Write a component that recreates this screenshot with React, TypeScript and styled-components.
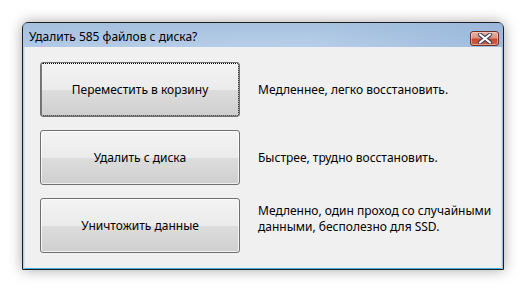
import React from "react";
import styled, { createGlobalStyle } from "styled-components";

const GlobalStyle = createGlobalStyle`
    html, body {
        margin: 0;
        padding: 0;
        background: #ffffff;
    }
    body {
        font-family: "Noto Sans", "Open Sans", sans-serif;
        font-size: 12px;
        color: #000;
    }
`;

interface Choice {
    label: string;
    lines: string[];
    focused?: boolean;
}

const choices: Choice[] = [
    {label: "Переместить в корзину", lines: ["Медленнее, легко восстановить."], focused: true},
    {label: "Удалить с диска", lines: ["Быстрее, трудно восстановить."]},
    {label: "Уничтожить данные", lines: ["Медленно, один проход со случайными", "данными, бесполезно для SSD."]},
];

const CloseIcon = () => (
    <svg width="16" height="11" viewBox="0 0 16 11">
        <path d="M3 1.5 L13 9.5 M13 1.5 L3 9.5" stroke="#3b3f5a" strokeWidth="4.2" strokeLinecap="round"/>
        <path d="M3 1.5 L13 9.5 M13 1.5 L3 9.5" stroke="#ffffff" strokeWidth="2.2" strokeLinecap="round"/>
    </svg>
);

const App: React.FC = () => {
    return (
        <Page>
            <GlobalStyle/>
            <Window>
                <TitleBar>
                    <Title>Удалить 585 файлов с диска?</Title>
                    <CloseButton><CloseIcon/></CloseButton>
                </TitleBar>
                <Client>
                    {choices.map((c) => (
                        <Row key={c.label}>
                            <ActionButton $focused={c.focused}>{c.label}</ActionButton>
                            <Description $lift={c.lines.length > 1}>
                                {c.lines.map((l) => <div key={l}>{l}</div>)}
                            </Description>
                        </Row>
                    ))}
                </Client>
            </Window>
        </Page>
    );
};

export default App;

const Page = styled.div`
    width: 526px;
    height: 292px;
    padding: 22px 0 0 22px;
    box-sizing: border-box;
`;

const Window = styled.div`
    width: 482px;
    height: 248px;
    box-sizing: border-box;
    border: 1px solid #202020;
    border-radius: 6px 6px 0 0;
    background: linear-gradient(90deg, #b3cae6 0%, #b8cfe9 60%, #9fbbdd 100%);
    box-shadow: 0 0 14px rgba(0, 0, 0, 0.35);
    display: flex;
    flex-direction: column;
`;

const TitleBar = styled.div`
    height: 24px;
    display: flex;
    align-items: center;
    justify-content: space-between;
    padding: 0 4px 0 6px;
    background: linear-gradient(180deg, rgba(150, 180, 215, 0.5) 0%, rgba(255, 255, 255, 0) 100%);
`;

const Title = styled.span`
    font-family: "Noto Sans", "Open Sans", sans-serif;
    font-size: 12px;
    color: #000;
    margin-top: 2px;
`;

const CloseButton = styled.div`
    width: 29px;
    height: 15px;
    margin-top: 6px;
    border: 1px solid #6b3329;
    border-radius: 3px;
    box-sizing: border-box;
    display: flex;
    align-items: center;
    justify-content: center;
    background: linear-gradient(180deg, #e9b1a3 0%, #dc9583 45%, #c94a30 55%, #d0603f 100%);
    box-shadow: inset 0 0 0 1px rgba(255, 220, 210, 0.5);
`;

const Client = styled.div`
    flex: 1;
    margin: 0 1px 0 1px;
    background: #f0f0f0;
    border: 1px solid #d4e3f2;
    border-bottom: 1px solid #3eb4e4;
    border-top: none;
    padding: 15px 0 0 15px;
    display: flex;
    flex-direction: column;
    gap: 13px;
`;

const Row = styled.div`
    display: flex;
    align-items: center;
    gap: 18px;
`;

const ActionButton = styled.div<{ $focused?: boolean }>`
    width: 200px;
    height: 55px;
    box-sizing: border-box;
    border: 1px solid #707070;
    border-radius: 3px;
    display: flex;
    align-items: center;
    justify-content: center;
    font-family: "Noto Sans", "Open Sans", sans-serif;
    font-size: 12px;
    color: #000;
    background: linear-gradient(180deg, #f3f3f3 0%, #ebebeb 50%, #dddddd 51%, #cfcfcf 100%);
    box-shadow: inset 0 0 0 1px rgba(255, 255, 255, 0.7);
    outline: ${(p) => (p.$focused ? "1px dotted #000" : "none")};
    outline-offset: -2px;
`;

const Description = styled.div<{ $lift?: boolean }>`
    font-family: "Noto Sans", "Open Sans", sans-serif;
    font-size: 12px;
    line-height: 16px;
    color: #000;
    margin-bottom: ${(p) => (p.$lift ? "14px" : "0")};
`;
